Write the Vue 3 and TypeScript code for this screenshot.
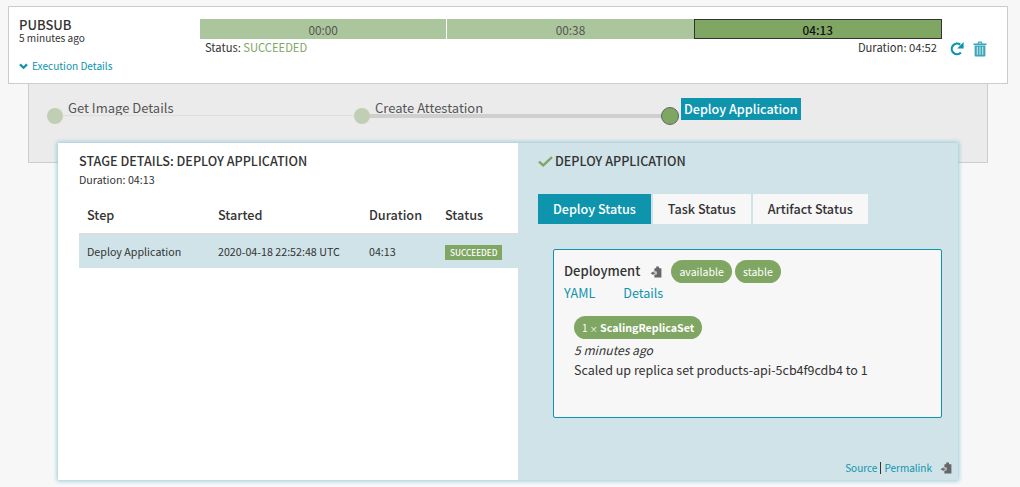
<template>
  <div class="page">
    <!-- execution header -->
    <div class="execution">
      <div class="exec-info">
        <div class="exec-title">PUBSUB</div>
        <div class="exec-time">5 minutes ago</div>
        <a class="exec-toggle">
          <svg width="9" height="7" viewBox="0 0 9 7"><path d="M1 1.4 4.5 4.8 8 1.4" fill="none" stroke="#0f94ae" stroke-width="2.2" /></svg>
          Execution Details
        </a>
      </div>
      <div class="exec-main">
        <div class="bar">
          <div v-for="seg in segments" :key="seg.label" class="bar-seg" :class="{ active: seg.active }">{{ seg.label }}</div>
        </div>
        <div class="exec-meta">
          <span>Status: <span class="ok">SUCCEEDED</span></span>
          <span>Duration: 04:52</span>
        </div>
      </div>
      <div class="exec-actions">
        <svg width="14" height="15" viewBox="0 0 14 15">
          <path d="M10.9 11.6A5.3 5.3 0 1 1 10.3 3.7" fill="none" stroke="#0f94ae" stroke-width="2.2" />
          <path d="M13.6 1V7.4H7.2Z" fill="#0f94ae" />
        </svg>
        <svg width="14" height="16" viewBox="0 0 14 16">
          <path d="M.5 2.6H13.5V4H.5ZM4.6 2.6 5.2.6H8.8L9.4 2.6H8.2L8 1.7H6L5.8 2.6Z" fill="#3ba6bc" />
          <path d="M1.6 4.4H12.4V14.4Q12.4 15.5 11.4 15.5H2.6Q1.6 15.5 1.6 14.4Z" fill="#3ba6bc" />
          <path d="M4.3 5.8V13.8M7 5.8V13.8M9.7 5.8V13.8" stroke="#cfe6eb" stroke-width="1.1" />
        </svg>
      </div>
    </div>

    <!-- stage graph -->
    <div class="graph">
      <div v-for="(stage, i) in stages" :key="stage" class="stage" :class="{ current: i === 2, done: i === 1 }">
        <span class="dot"></span>
        <span class="stage-label">{{ stage }}</span>
      </div>
    </div>

    <!-- details panel -->
    <div class="details">
      <div class="left">
        <h4 class="left-title">STAGE DETAILS: DEPLOY APPLICATION</h4>
        <div class="left-duration">Duration: 04:13</div>
        <div class="grid head">
          <span>Step</span><span>Started</span><span>Duration</span><span>Status</span>
        </div>
        <div class="grid row">
          <span>Deploy Application</span>
          <span>2020-04-18 22:52:48 UTC</span>
          <span>04:13</span>
          <span><em class="tag">SUCCEEDED</em></span>
        </div>
      </div>
      <div class="right">
        <h4 class="right-title">
          <svg width="15" height="11" viewBox="0 0 15 11"><path d="M1 5.6 5.2 9.4 14 1.2" fill="none" stroke="#7fa663" stroke-width="2.4" /></svg>
          DEPLOY APPLICATION
        </h4>
        <div class="tabs">
          <div v-for="(tab, i) in tabs" :key="tab" class="tab" :class="{ selected: i === 0 }">{{ tab }}</div>
        </div>
        <div class="box">
          <div class="box-head">
            <strong>Deployment</strong>
            <svg class="clip" width="12" height="12" viewBox="0 0 12 12"><path d="M4.4 2.2H6.2V.6H9V2.2H11.4V11.6H4.4V8.6H6.6V5.4H4.4ZM3.6 5.2V6.6H5.6V7.8H3.6V9.2L.6 7.2Z" fill="#666" /></svg>
            <span class="pill">available</span>
            <span class="pill stable">stable</span>
          </div>
          <div class="box-links"><a>YAML</a><a>Details</a></div>
          <span class="pill event">1 <i>×</i> <b>ScalingReplicaSet</b></span>
          <div class="event-time">5 minutes ago</div>
          <div class="event-msg">Scaled up replica set products-api-5cb4f9cdb4 to 1</div>
        </div>
        <div class="links">
          <a>Source</a><span class="sep"></span><a>Permalink</a>
          <svg class="clip-foot" width="12" height="12" viewBox="0 0 12 12"><path d="M4.4 2.2H6.2V.6H9V2.2H11.4V11.6H4.4V8.6H6.6V5.4H4.4ZM3.6 5.2V6.6H5.6V7.8H3.6V9.2L.6 7.2Z" fill="#666" /></svg>
        </div>
      </div>
    </div>
  </div>
</template>

<script setup lang="ts">
const segments = [
  { label: '00:00', active: false },
  { label: '00:38', active: false },
  { label: '04:13', active: true },
]
const stages = ['Get Image Details', 'Create Attestation', 'Deploy Application']
const tabs = ['Deploy Status', 'Task Status', 'Artifact Status']
</script>

<style>
html, body {
  margin: 0;
  background: #f7f7f7;
}
</style>

<style scoped>
.page {
  width: 1020px;
  height: 487px;
  overflow: hidden;
  padding-top: 6px;
  box-sizing: border-box;
  background: #f7f7f7;
  color: #333;
  font-family: "Noto Sans CJK SC", "Source Sans Pro", "Noto Sans", sans-serif;
  font-size: 12px;
}

a { color: #0f94ae; }

.execution {
  position: relative;
  z-index: 2;
  width: 1000px;
  height: 78px;
  margin-left: 8px;
  box-sizing: border-box;
  display: flex;
  background: #fff;
  border: 1px solid #ccc;
}

.exec-info {
  width: 191px;
  padding: 11px 0 0 10px;
  box-sizing: border-box;
}

.exec-title {
  font-size: 13px;
  line-height: 14px;
  font-weight: 500;
}

.exec-time {
  font-size: 10.1px;
  line-height: 12px;
}

.exec-toggle {
  display: flex;
  align-items: center;
  gap: 4px;
  margin-top: 15px;
  font-size: 10.1px;
  line-height: 14px;
}

.exec-main {
  width: 742px;
  padding-top: 12px;
}

.bar {
  display: flex;
  height: 20px;
}

.bar-seg {
  flex: 1;
  background: #abc69c;
  color: #555;
  text-align: center;
  font-size: 11.8px;
  line-height: 21px;
  border-right: 1px solid #fff;
}

.bar-seg:nth-child(2) { border-right: 0; }

.bar-seg.active {
  background: #7fa663;
  border: 1px solid #333;
  color: #111;
  font-weight: 500;
  line-height: 19px;
  box-sizing: border-box;
}

.exec-meta {
  display: flex;
  justify-content: space-between;
  padding: 0 5px;
  font-size: 11.2px;
  line-height: 14px;
  margin-top: 1px;
}

.ok { color: #7fa663; }

.exec-actions {
  display: flex;
  gap: 9px;
  align-items: flex-start;
  padding: 34px 0 0 8px;
}

.graph {
  width: 960px;
  height: 79px;
  margin-left: 28px;
  box-sizing: border-box;
  display: flex;
  padding: 0 0 0 18px;
  background: #ebebeb;
  border: 1px solid #ccc;
  border-top: 0;
}

.stage {
  position: relative;
  width: 307px;
  height: 50px;
  font-size: 13px;
  color: #555;
}

.stage::after {
  content: "";
  position: absolute;
  left: 8px;
  top: 31px;
  width: 307px;
  height: 1px;
  background: #dedede;
}

.stage.done::after {
  top: 30px;
  height: 4px;
  background: #cfcfcf;
}

.stage.current::after { display: none; }

.dot {
  position: absolute;
  z-index: 1;
  left: 0;
  top: 24px;
  width: 16px;
  height: 16px;
  border-radius: 50%;
  background: #c0cfb3;
}

.stage.current .dot {
  top: 23px;
  width: 16px;
  height: 16px;
  background: #7fa663;
  border: 1px solid #666;
}

.stage-label {
  position: absolute;
  left: 21px;
  top: 16px;
  line-height: 16px;
  white-space: nowrap;
}

.stage.current .stage-label {
  left: 20px;
  top: 14px;
  padding: 2px 3px;
  font-size: 12.6px;
  line-height: 18px;
  background: #0f94ae;
  color: #fff;
  font-weight: 500;
}

.details {
  position: relative;
  z-index: 1;
  width: 900px;
  height: 337px;
  margin: -20px 0 0 58px;
  display: flex;
  box-shadow: 0 0 4px 1px rgba(120, 190, 205, 0.75);
}

.left {
  width: 460px;
  box-sizing: border-box;
  padding: 9px 0 0 21px;
  background: #fff;
}

.left-title, .right-title {
  margin: 0;
  font-size: 12.6px;
  line-height: 18px;
  font-weight: 500;
}

.left-duration {
  font-size: 10.7px;
  line-height: 14px;
  margin-top: 3px;
}

.grid {
  display: grid;
  grid-template-columns: 131px 151px 76px 1fr;
  padding-left: 8px;
}

.head {
  margin-top: 13px;
  height: 35px;
  padding-bottom: 5px;
  box-sizing: border-box;
  align-items: center;
  font-size: 12.7px;
  font-weight: 500;
  border-bottom: 2px solid #ddd;
}

.row {
  height: 33px;
  align-items: center;
  background: #cfe3e8;
  font-size: 10.7px;
}

.tag {
  display: inline-block;
  padding: 0 5px;
  background: #7fa663;
  color: #fff;
  font-style: normal;
  font-weight: 500;
  font-size: 8.2px;
  line-height: 15px;
}

.right {
  position: relative;
  width: 440px;
  box-sizing: border-box;
  padding: 9px 0 0 20px;
  background: #cfe3e8;
}

.right-title {
  display: flex;
  align-items: center;
  gap: 2px;
}

.tabs {
  display: flex;
  gap: 2px;
  margin-top: 24px;
}

.tab {
  height: 30px;
  padding: 0 15px;
  background: #f7f7f7;
  font-size: 12.6px;
  font-weight: 500;
  line-height: 30px;
}

.tab.selected {
  background: #0f94ae;
  color: #fff;
}

.box {
  width: 389px;
  height: 169px;
  margin: 25px 0 0 15px;
  padding: 10px 10px 0 10px;
  box-sizing: border-box;
  background: #f7f7f7;
  border: 1px solid #0f94ae;
  border-radius: 2px;
}

.box-head {
  display: flex;
  align-items: center;
  font-size: 13px;
  height: 23px;
}

.box-head strong {
  font-weight: 500;
  padding-bottom: 2px;
}

.clip { margin: 0 9px 0 10px; }

.pill {
  display: inline-block;
  padding: 0 8px;
  height: 23px;
  border-radius: 12px;
  background: #7fa663;
  color: #fff;
  font-size: 10.6px;
  line-height: 23px;
  box-sizing: border-box;
}

.stable { margin-left: 3px; }

.box-links {
  display: flex;
  gap: 28px;
  font-size: 12.6px;
  line-height: 16px;
  margin-top: 2px;
}

.event {
  margin: 15px 0 0 10px;
  font-size: 10px;
}

.event i {
  font-style: normal;
  font-size: 8px;
}

.event b {
  font-weight: 700;
  font-size: 10.7px;
}

.event-time {
  margin: 2px 0 0 10px;
  font-style: italic;
  line-height: 18px;
  font-size: 12.1px;
}

.event-msg {
  margin: 2px 0 0 10px;
  font-size: 12.5px;
  line-height: 18px;
}

.links {
  position: absolute;
  right: 6px;
  bottom: 5px;
  display: flex;
  align-items: center;
  font-size: 10px;
  line-height: 14px;
}

.sep {
  width: 1px;
  height: 12px;
  margin: 0 3px;
  background: #333;
}

.clip-foot { margin-left: 8px; }
</style>
